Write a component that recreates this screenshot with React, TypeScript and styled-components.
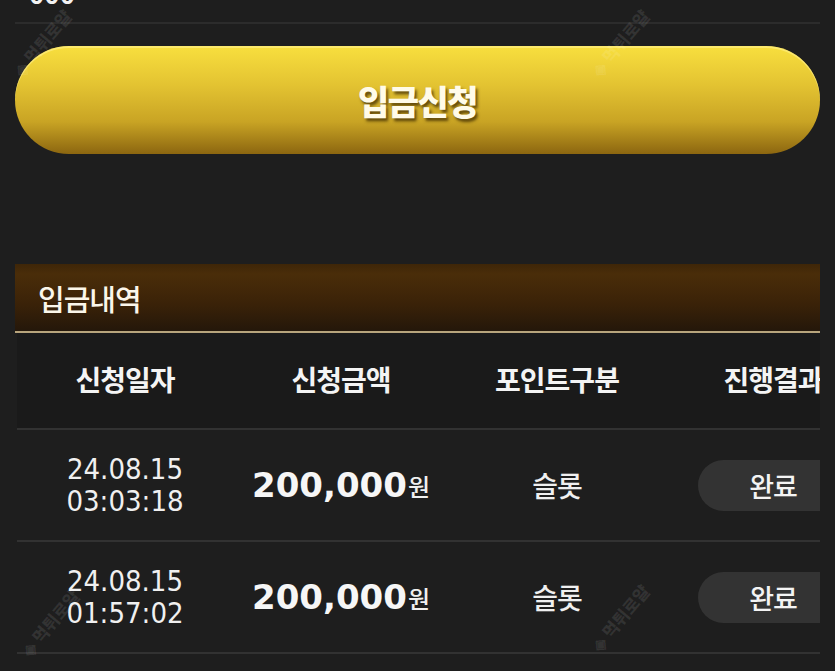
import React from 'react';
import styled, { createGlobalStyle } from 'styled-components';

const GlobalStyle = createGlobalStyle`
  html, body {
    margin: 0;
    padding: 0;
    background: #1e1e1e;
    overflow: hidden;
  }
  body {
    font-family: "Noto Sans CJK KR", "Noto Sans", sans-serif;
    color: #f2f2f2;
  }
`;

const Page = styled.div`
  position: relative;
  width: 835px;
  height: 671px;
  overflow: hidden;
  padding: 0 15px;
  box-sizing: border-box;
`;

const InfoRow = styled.div`
  display: flex;
  align-items: center;
  height: 60px;
  margin-top: -38px;
  padding-left: 14px;
  border-bottom: 2px solid #2c2c2c;
  font-size: 26px;
  font-weight: 700;
`;

const ApplyButton = styled.button`
  display: flex;
  align-items: center;
  justify-content: center;
  width: 100%;
  height: 108px;
  margin-top: 22px;
  border: none;
  border-radius: 54px;
  background: linear-gradient(180deg, #f8df3e 0%, #e4c432 35%, #c9a424 70%, #8c6610 100%);
  box-shadow: inset 0 2px 0 rgba(255, 240, 140, 0.6);
  font-family: "Noto Sans CJK KR", sans-serif;
  font-size: 34px;
  font-weight: 900;
  letter-spacing: -1.5px;
  color: #fffbe8;
  text-shadow: 2px 3px 3px rgba(60, 40, 0, 0.75);
`;

const Section = styled.section`
  margin-top: 110px;
`;

const SectionHeader = styled.div`
  display: flex;
  align-items: center;
  height: 67px;
  padding-left: 23px;
  background: linear-gradient(180deg, #3e2608 0%, #4a2d09 15%, #3a2208 60%, #24170a 100%);
  border-bottom: 2px solid #b7a47c;
  font-size: 29px;
  font-weight: 500;
  letter-spacing: -1px;
  color: #fbf6ea;
`;

const TableWrap = styled.div`
  overflow: hidden;
`;

const Table = styled.div`
  width: 864px;
  margin-left: 2px;
`;

const Row = styled.div<{ $head?: boolean }>`
  display: grid;
  grid-template-columns: repeat(4, 216px);
  align-items: center;
  height: ${p => (p.$head ? '95px' : '110px')};
  border-bottom: 2px solid #323232;
  background: ${p => (p.$head ? '#1a1a1a' : 'transparent')};
`;

const HeadCell = styled.div`
  text-align: center;
  font-size: 28px;
  font-weight: 700;
  letter-spacing: -1px;
  line-height: 1;
  padding-bottom: 4px;
  color: #f4f4f4;
`;

const Cell = styled.div`
  display: flex;
  justify-content: center;
  align-items: center;
`;

const DateText = styled.div`
  font-family: "DejaVu Sans", sans-serif;
  font-stretch: condensed;
  font-size: 29px;
  line-height: 32px;
  text-align: center;
  color: #f0f0f0;
`;

const Amount = styled.span`
  font-family: "DejaVu Sans", sans-serif;
  font-size: 34px;
  font-weight: 700;
  color: #f6f6f6;
`;

const Won = styled.span`
  font-size: 24px;
  font-weight: 500;
  margin-left: 1px;
  color: #f0f0f0;
`;

const Kind = styled.span`
  font-size: 28px;
  font-weight: 500;
  letter-spacing: -1px;
  color: #f0f0f0;
`;

const StatusPill = styled.span`
  display: flex;
  align-items: center;
  justify-content: center;
  width: 150px;
  height: 51px;
  border-radius: 26px;
  background: #333333;
  font-size: 27px;
  font-weight: 500;
  letter-spacing: -1px;
  color: #f4f4f4;
`;

const Watermark = styled.div<{ $x: number; $y: number }>`
  position: absolute;
  left: ${p => p.$x}px;
  top: ${p => p.$y}px;
  transform: rotate(-50deg);
  font-size: 17px;
  font-weight: 900;
  color: rgba(255, 255, 255, 0.09);
  pointer-events: none;
  white-space: nowrap;
`;

const rows = [
  { date: '24.08.15', time: '03:03:18', amount: '200,000', kind: '슬롯', status: '완료' },
  { date: '24.08.15', time: '01:57:02', amount: '200,000', kind: '슬롯', status: '완료' },
];

const App = () => {
  return (
    <>
      <GlobalStyle />
      <Page>
        <InfoRow>000</InfoRow>
        <ApplyButton>입금신청</ApplyButton>

        <Section>
          <SectionHeader>입금내역</SectionHeader>
          <TableWrap>
            <Table>
              <Row $head>
                <HeadCell>신청일자</HeadCell>
                <HeadCell>신청금액</HeadCell>
                <HeadCell>포인트구분</HeadCell>
                <HeadCell>진행결과</HeadCell>
              </Row>
              {rows.map((r, i) => (
                <Row key={i}>
                  <Cell>
                    <DateText>
                      {r.date}
                      <br />
                      {r.time}
                    </DateText>
                  </Cell>
                  <Cell>
                    <Amount>{r.amount}</Amount>
                    <Won>원</Won>
                  </Cell>
                  <Cell>
                    <Kind>{r.kind}</Kind>
                  </Cell>
                  <Cell>
                    <StatusPill>{r.status}</StatusPill>
                  </Cell>
                </Row>
              ))}
            </Table>
          </TableWrap>
        </Section>

        <Watermark $x={2} $y={30}>◈ 먹튀로얄</Watermark>
        <Watermark $x={580} $y={30}>◈ 먹튀로얄</Watermark>
        <Watermark $x={10} $y={610}>◈ 먹튀로얄</Watermark>
        <Watermark $x={580} $y={605}>◈ 먹튀로얄</Watermark>
      </Page>
    </>
  );
};

export default App;
